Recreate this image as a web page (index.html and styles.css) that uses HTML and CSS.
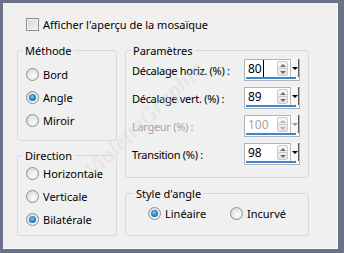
FILE: index.html
```html
<!DOCTYPE html>
<html lang="fr">
<head>
    <meta charset="UTF-8">
    <title>Mosaïque</title>
    <link rel="stylesheet" href="styles.css">
</head>
<body>

    <div class="dialog">
        <!-- Preview toggle -->
        <div class="check-row">
            <span class="checkbox"></span>
            <span>Afficher l'aperçu de la mosaïque</span>
        </div>

        <div class="columns">
            <div class="col col-left">
                <fieldset class="group group-method">
                    <legend>Méthode</legend>
                    <div class="radio-row"><span class="radio"></span>Bord</div>
                    <div class="radio-row"><span class="radio checked"></span>Angle</div>
                    <div class="radio-row"><span class="radio"></span>Miroir</div>
                </fieldset>

                <fieldset class="group group-direction">
                    <legend>Direction</legend>
                    <div class="radio-row"><span class="radio"></span>Horizontale</div>
                    <div class="radio-row"><span class="radio"></span>Verticale</div>
                    <div class="radio-row"><span class="radio checked"></span>Bilatérale</div>
                </fieldset>
            </div>

            <div class="col col-right">
                <fieldset class="group group-params">
                    <legend>Paramètres</legend>
                    <div class="param-row">
                        <span class="param-label">Décalage horiz. (%) :</span>
                        <div class="spin">
                            <div class="spin-main">
                                <span class="spin-value"><span class="caret">80</span></span>
                                <span class="spin-arrows"><span class="up"></span><span class="down"></span></span>
                                <span class="spin-drop"></span>
                            </div>
                            <div class="spin-bar"></div>
                        </div>
                    </div>
                    <div class="param-row">
                        <span class="param-label">Décalage vert. (%) :</span>
                        <div class="spin">
                            <div class="spin-main">
                                <span class="spin-value">89</span>
                                <span class="spin-arrows"><span class="up"></span><span class="down"></span></span>
                                <span class="spin-drop"></span>
                            </div>
                            <div class="spin-bar"></div>
                        </div>
                    </div>
                    <div class="param-row disabled">
                        <span class="param-label">Largeur (%) :</span>
                        <div class="spin">
                            <div class="spin-main">
                                <span class="spin-value">100</span>
                                <span class="spin-arrows"><span class="up"></span><span class="down"></span></span>
                                <span class="spin-drop"></span>
                            </div>
                            <div class="spin-bar"></div>
                        </div>
                    </div>
                    <div class="param-row">
                        <span class="param-label">Transition (%) :</span>
                        <div class="spin">
                            <div class="spin-main">
                                <span class="spin-value">98</span>
                                <span class="spin-arrows"><span class="up"></span><span class="down"></span></span>
                                <span class="spin-drop"></span>
                            </div>
                            <div class="spin-bar"></div>
                        </div>
                    </div>
                </fieldset>

                <fieldset class="group group-style">
                    <legend>Style d'angle</legend>
                    <div class="style-row">
                        <div class="radio-row style-option"><span class="radio checked"></span>Linéaire</div>
                        <div class="radio-row"><span class="radio"></span>Incurvé</div>
                    </div>
                </fieldset>
            </div>
        </div>

        <!-- faint watermark over the dialog -->
        <div class="watermark">VioletteGraphic</div>
    </div>

</body>
</html>
```

FILE: styles.css
```css
body {
    margin: 0;
    background: #6b7189;
}

.dialog {
    position: relative;
    box-sizing: border-box;
    width: 344px;
    height: 253px;
    overflow: hidden;
    border-style: solid;
    border-color: #6b7189;
    border-width: 3px 6px 4px 3px;
    box-shadow: inset -1px -1px 0 #fbfbfb;
    background: #f0f0f0;
    padding: 14px 0 0 14px;
    font-family: "Noto Sans", "Open Sans", sans-serif;
    font-size: 11px;
    line-height: 15px;
    color: #000;
}

/* top checkbox row */
.check-row {
    display: flex;
    align-items: center;
    gap: 4px;
    margin-left: 9px;
    height: 15px;
}

.checkbox {
    box-sizing: border-box;
    width: 13px;
    height: 13px;
    border: 1px solid #8e8f8f;
    background: linear-gradient(135deg, #d4d4d4, #f4f4f4);
    box-shadow: inset 0 0 0 1px #f4f4f4;
}

.columns {
    display: flex;
    gap: 8px;
    margin-top: 11px;
}

.col {
    display: flex;
    flex-direction: column;
}

.col-left {
    width: 100px;
}

.col-right {
    width: 184px;
}

/* group boxes */
.group {
    box-sizing: border-box;
    min-width: 0;
    margin: 0;
    border: 1px solid #d5dadf;
    border-radius: 3px;
}

.group legend {
    padding: 0 2px;
    margin-left: -3px;
    line-height: 15px;
}

.group-method {
    padding: 8px 8px 12px 8px;
}

.group-direction {
    margin-top: 7px;
    padding: 2px 8px 8px 8px;
}

.group-params {
    padding: 1px 8px 12px 6px;
}

.group-params legend {
    margin-left: -1px;
}

.group-style {
    margin-top: 8px;
    padding: 4px 8px 14px 22px;
}

.group-style legend {
    margin-left: -14px;
}

/* radio buttons */
.radio-row {
    display: flex;
    align-items: center;
    gap: 4px;
    height: 16px;
}

.group-method .radio-row + .radio-row,
.group-direction .radio-row + .radio-row {
    margin-top: 7px;
}

.radio {
    box-sizing: border-box;
    width: 13px;
    height: 13px;
    border-radius: 50%;
    border: 1px solid #8e8f8f;
    background: radial-gradient(circle at 60% 65%, #fdfdfd 0%, #e6e6e6 55%, #cfcfcf 100%);
    position: relative;
}

.radio.checked::after {
    content: '';
    position: absolute;
    left: 2px;
    top: 2px;
    width: 7px;
    height: 7px;
    border-radius: 50%;
    background: radial-gradient(circle at 45% 40%, #7ccaf0 0%, #2a8ccc 45%, #114f86 100%);
}

.style-row {
    display: flex;
}

.style-option {
    width: 82px;
}

/* parameter rows with spin boxes */
.param-row {
    display: flex;
    justify-content: space-between;
    align-items: center;
    height: 22px;
}

.param-row + .param-row {
    margin-top: 6px;
}

.param-label {
    letter-spacing: -0.3px;
}

.param-row.disabled {
    color: #a3a3a3;
}

.spin {
    box-sizing: border-box;
    width: 56px;
    height: 22px;
    border: 1px solid #aeb4bc;
    background: #fff;
    display: flex;
    flex-direction: column;
}

.spin-main {
    flex: 1;
    display: flex;
    align-items: center;
}

.spin-value {
    flex: 1;
    padding-left: 3px;
    font-size: 12px;
    color: #000;
}

.disabled .spin-value {
    color: #a3a3a3;
}

.caret {
    border-right: 1px solid #000;
    padding-right: 1px;
}

.spin-arrows {
    box-sizing: border-box;
    display: flex;
    flex-direction: column;
    width: 11px;
    height: 15px;
    margin-right: 2px;
    border: 1px solid #c9cdd2;
    border-radius: 2px;
    background: linear-gradient(#f6f6f6, #e4e4e4);
}

.spin-arrows span {
    flex: 1;
    display: flex;
    align-items: center;
    justify-content: center;
}

.spin-arrows .up {
    border-bottom: 1px solid #c9cdd2;
}

.spin-arrows .up::before {
    content: '';
    border-left: 3px solid transparent;
    border-right: 3px solid transparent;
    border-bottom: 3px solid #707070;
}

.spin-arrows .down::before {
    content: '';
    border-left: 3px solid transparent;
    border-right: 3px solid transparent;
    border-top: 3px solid #707070;
}

.disabled .spin-arrows .up::before {
    border-bottom-color: #b4b4b4;
}

.disabled .spin-arrows .down::before {
    border-top-color: #b4b4b4;
}

.spin-drop {
    box-sizing: border-box;
    display: flex;
    align-items: center;
    justify-content: center;
    width: 9px;
    height: 18px;
    align-self: flex-start;
    margin-top: -1px;
    border-left: 1px solid #b8bcc2;
    border-right: 1px solid #5a5a5a;
    background: #f7f7f7;
}

.spin-drop::before {
    content: '';
    border-left: 3px solid transparent;
    border-right: 3px solid transparent;
    border-top: 3px solid #000;
}

.disabled .spin-drop::before {
    border-top-color: #9a9a9a;
}

.spin-bar {
    height: 3px;
    margin: 0 3px 1px 1px;
    background: #3d86cd;
}

/* faint diagonal watermark */
.watermark {
    position: absolute;
    left: 141px;
    top: 116px;
    transform: translate(-50%, -50%) rotate(-44deg);
    font-family: "Liberation Serif", serif;
    font-style: italic;
    font-size: 22px;
    letter-spacing: 1px;
    white-space: nowrap;
    color: rgba(255, 255, 255, 0.3);
    text-shadow: 0 0 1px rgba(160, 160, 160, 0.3);
    pointer-events: none;
}
```
